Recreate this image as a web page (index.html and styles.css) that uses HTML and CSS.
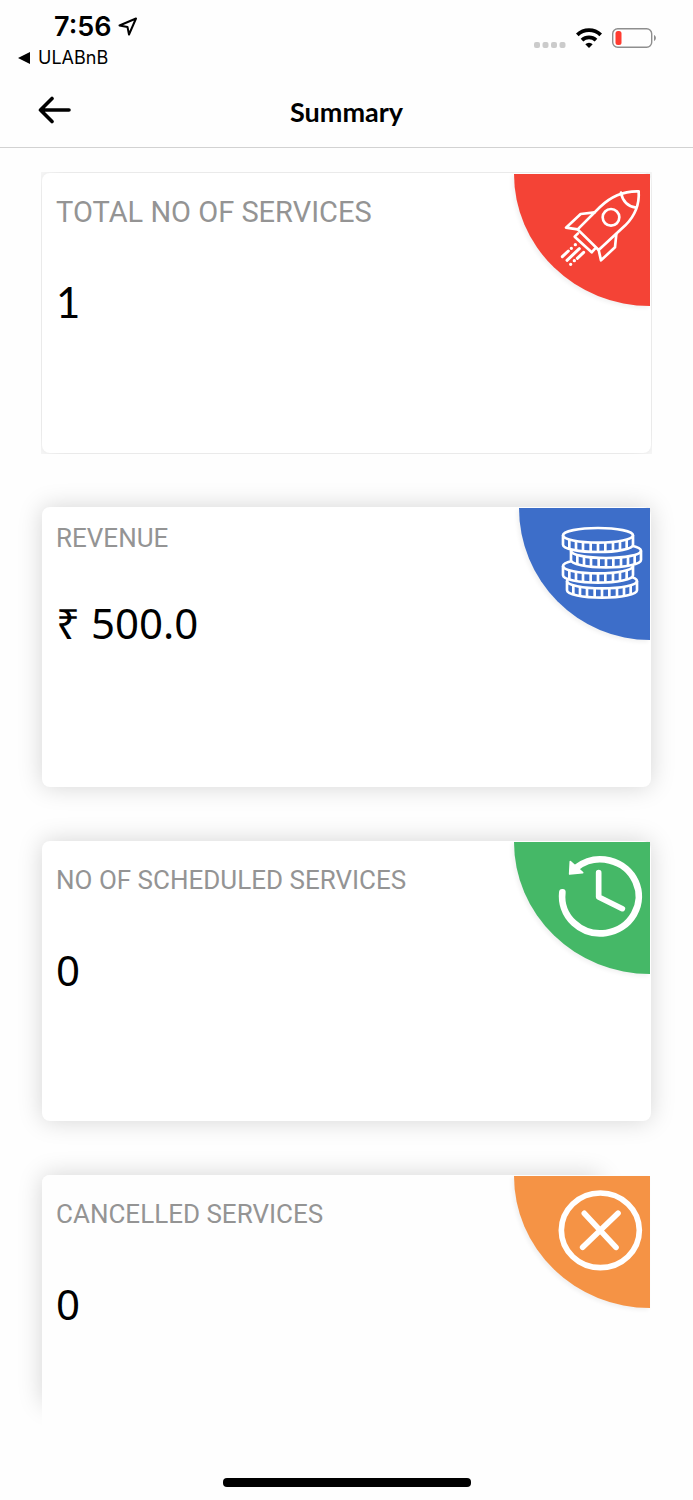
FILE: index.html
```
<!DOCTYPE html>
<html lang="en">
<head>
  <meta charset="UTF-8" />
  <meta name="viewport" content="width=device-width, initial-scale=1.0"/>
  <title>Summary</title>
  <link rel="stylesheet" href="styles.css">
</head>
<body>
  <header>
    <div class="status-bar">
      <div class="status-left">
        <div class="clock">
          <span>7:56</span>
          <svg width="20" height="20" viewBox="0 0 20 20">
            <path d="M1.500 8.500L18 1.500L11 17.500L9.500 10Z" fill="none" stroke="#000" stroke-width="2" stroke-linejoin="round"/>
          </svg>
        </div>
        <a class="return-app" href="#">
          <svg width="12" height="12" viewBox="0 0 12 12"><path d="M0 6L12 0V12Z"/></svg>
          ULABnB
        </a>
      </div>
      <div class="status-right">
        <svg width="32" height="20" viewBox="0 0 32 20" fill="#cbcbcb">
          <rect x="0" y="14" width="6" height="6" rx="2"/>
          <rect x="8.500" y="14" width="6" height="6" rx="2"/>
          <rect x="17" y="14" width="6" height="6" rx="2"/>
          <rect x="25.500" y="14" width="6" height="6" rx="2"/>
        </svg>
        <svg width="26" height="20" viewBox="0 0 26 20" fill="none" stroke="#000" stroke-width="3.800">
          <path d="M1.300 6.800A17 17 0 0 1 24.700 6.800"/>
          <path d="M6 12.200A10.200 10.200 0 0 1 20 12.200"/>
          <path d="M13 20L9.300 16.200A5.200 5.200 0 0 1 16.700 16.200Z" fill="#000" stroke="none"/>
        </svg>
        <svg width="44" height="20" viewBox="0 0 44 20">
          <rect x="0.700" y="0.700" width="39" height="18.600" rx="5" fill="none" stroke="#8e8e8e" stroke-width="1.400"/>
          <rect x="3.500" y="3" width="6" height="14" rx="2.500" fill="#ff3b30"/>
          <path d="M42 7C44.500 8 44.500 12 42 13Z" fill="#8e8e8e"/>
        </svg>
      </div>
    </div>
    <nav>
      <button type="button" class="back" aria-label="Back">
        <svg width="34" height="28" viewBox="0 0 34 28" fill="none" stroke="#000" stroke-width="3.600" stroke-linecap="round" stroke-linejoin="round">
          <path d="M31 14H2.500M14 2.500L2.500 14L14 25.500"/>
        </svg>
      </button>
      <h1>Summary</h1>
    </nav>
  </header>

  <main>
    <section class="card total">
      <div class="info">
        <h2>TOTAL NO OF SERVICES</h2>
        <p>1</p>
      </div>
      <div class="corner red">
        <svg viewBox="42 42 408 396" fill="none" stroke="#fff" stroke-width="8" stroke-linecap="round" stroke-linejoin="round">
          <path d="M233 208L300 141Q350 92 416 94Q420 152 376 196L296 270Z"/>
          <path d="M363 98Q370 136 408 143"/>
          <circle cx="333" cy="172" r="25"/>
          <path d="M284 157L242 162L198 203L233 208"/>
          <path d="M349 222L345 262L303 301L296 270"/>
          <path d="M234 220L224 230L275 277L285 266"/>
          <path d="M187 290L205 273M201 301L238 266M232 295L251 277" stroke-width="9"/>
          <path d="M214 265h0M226 254h0M223 302h0M212 313h0" stroke-width="10"/>
        </svg>
      </div>
    </section>

    <section class="card revenue">
      <div class="info">
        <h2>REVENUE</h2>
        <p>₹ 500.0</p>
      </div>
      <div class="corner blue">
        <svg viewBox="57 39 393 396" fill="none" stroke="#fff" stroke-width="8">
          <defs>
            <g id="coin">
              <path d="M-105 0V28A105 22 0 0 0 105 28V0A105 22 0 0 0 -105 0Z" fill="#3d6ec9"/>
              <path d="M-105 0A105 22 0 0 0 105 0"/>
              <path d="M-86 13v28M-66 17v28M-45 20v28M-22 22v28M0 22v28M22 22v28M45 20v28M66 17v28M86 13v28"/>
            </g>
          </defs>
          <use href="#coin" x="306" y="258"/>
          <use href="#coin" x="294" y="213"/>
          <use href="#coin" x="318" y="167"/>
          <use href="#coin" x="294" y="121"/>
        </svg>
      </div>
    </section>

    <section class="card">
      <div class="info">
        <h2>NO OF SCHEDULED SERVICES</h2>
        <p>0</p>
      </div>
      <div class="corner green">
        <svg viewBox="42 36 408 396" fill="none" stroke="#fff" stroke-linecap="round" stroke-linejoin="round">
          <path d="M187 187A115 111 0 1 0 230 112" stroke-width="20"/>
          <path d="M211 95L209 132L248 128Z" fill="#fff" stroke-width="5"/>
          <path d="M296 128V201L367 236" stroke-width="17"/>
        </svg>
      </div>
    </section>

    <section class="card cancelled">
      <div class="info">
        <h2>CANCELLED SERVICES</h2>
        <p>0</p>
      </div>
      <div class="corner orange">
        <svg viewBox="42 45 408 396" fill="none" stroke="#fff" stroke-width="17" stroke-linecap="round">
          <ellipse cx="301" cy="208" rx="117" ry="112"/>
          <path d="M253 157L348 259M354 157L248 259"/>
        </svg>
      </div>
    </section>
  </main>

  <div class="home-indicator"></div>
</body>
</html>
```
FILE: styles.css
```
* {
  box-sizing: border-box;
}

body {
  margin: 0;
  background-color: #fefefe;
  color: #000;
  font-family: Lato, sans-serif;
}

h1, h2, p {
  margin: 0;
  font-weight: 400;
}

svg {
  display: block;
}

header {
  border-bottom: 1px solid #d2d2d2;
}

.status-bar {
  display: flex;
  justify-content: space-between;
  padding: 11px 37px 0 18px;
  font-family: Inter, sans-serif;
}

.clock {
  display: flex;
  align-items: center;
  gap: 6px;
  padding-left: 36px;
  font-size: 27px;
  font-weight: 600;
  line-height: 32px;
}

.return-app {
  display: flex;
  align-items: center;
  gap: 8px;
  color: #000;
  font-size: 18px;
  line-height: 30px;
  text-decoration: none;
}

.status-right {
  display: flex;
  gap: 10px;
  padding-top: 17px;
}

nav {
  display: grid;
  grid-template-columns: 1fr auto 1fr;
  align-items: center;
  height: 74px;
  padding: 0 38px;
}

.back {
  justify-self: start;
  padding: 0;
  border: none;
  background: none;
  cursor: pointer;
}

h1 {
  padding-top: 3px;
  font-size: 27px;
  font-weight: 700;
}

main {
  display: flex;
  flex-direction: column;
  gap: 54px;
  padding: 25px 42px 23px;
}

.card {
  position: relative;
  display: flex;
  justify-content: space-between;
  height: 280px;
  padding: 1px 1px 0 14px;
  border-radius: 8px;
  background-color: #fff;
  box-shadow: 0 0 24px rgba(0,0,0,0.17);
}

.info {
  padding-top: 20px;
}

h2 {
  color: #949494;
  font-family: Roboto, sans-serif;
  font-size: 26px;
  line-height: 36px;
}

.info p {
  margin-top: 42px;
  font-family: "Noto Sans", sans-serif;
  font-size: 42px;
  line-height: 60px;
}

.total {
  clip-path: inset(-1px);
}

.total h2 {
  font-size: 29px;
}

.total p {
  font-family: Lato, sans-serif;
}

.revenue .info {
  padding-top: 12px;
}

.revenue p {
  margin-top: 37px;
}

/* shadow stops short of the right and bottom edges */
.cancelled {
  z-index: 0;
  background: none;
  box-shadow: none;
}

.cancelled::before {
  content: "";
  position: absolute;
  z-index: -2;
  inset: 0 50px 50px 0;
  border-radius: 8px;
  box-shadow: 0 0 24px rgba(0,0,0,0.17);
}

.cancelled::after {
  content: "";
  position: absolute;
  z-index: -1;
  inset: 0;
  border-radius: 8px;
  background-color: #fefefe;
}

.corner {
  width: 136px;
  height: 132px;
  border-bottom-left-radius: 100%;
  box-shadow: -2px 2px 4px rgba(0,0,0,0.06);
}

.corner svg {
  width: 100%;
  height: 100%;
}

.red {
  background-color: #f44336;
}

.blue {
  width: 131px;
  background-color: #3d6ec9;
}

.green {
  background-color: #45b867;
}

.orange {
  background-color: #f59345;
}

.home-indicator {
  width: 248px;
  height: 9px;
  margin: 0 auto 13px;
  border-radius: 4px;
  background-color: #000;
}
```
